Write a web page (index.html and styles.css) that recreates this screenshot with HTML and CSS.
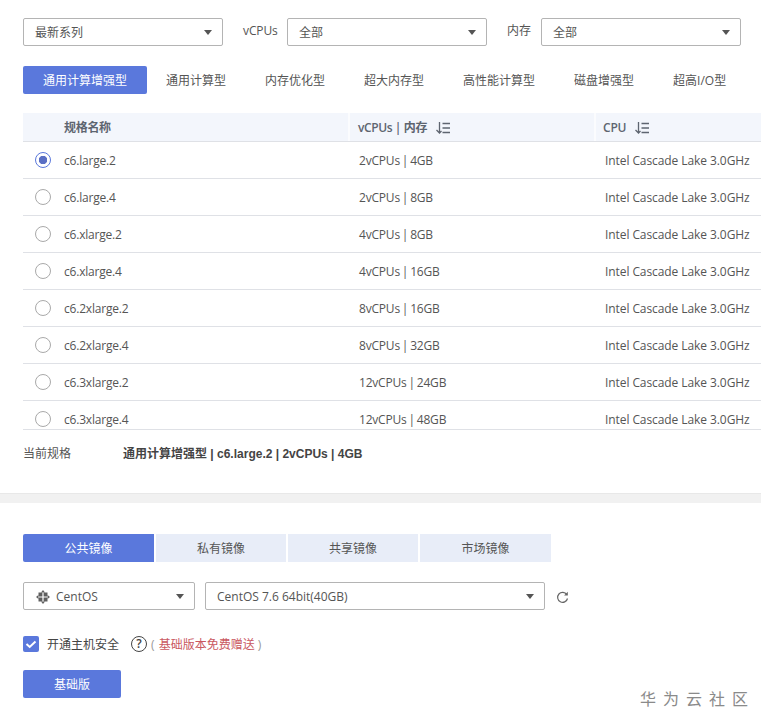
FILE: index.html
```html
<!DOCTYPE html>
<html lang="zh-CN">
<head>
<meta charset="utf-8">
<title>规格选择</title>
<link rel="stylesheet" href="styles.css">
</head>
<body>
<section class="spec">
  <div class="filters">
    <div class="select"><span>最新系列</span><i class="caret"></i></div>
    <label class="flabel l-vcpu">vCPUs</label>
    <div class="select"><span>全部</span><i class="caret"></i></div>
    <label class="flabel l-mem">内存</label>
    <div class="select"><span>全部</span><i class="caret"></i></div>
  </div>
  <div class="types">
    <a class="type active">通用计算增强型</a>
    <a class="type t2">通用计算型</a>
    <a class="type t3">内存优化型</a>
    <a class="type t3">超大内存型</a>
    <a class="type t3">高性能计算型</a>
    <a class="type t3">磁盘增强型</a>
    <a class="type t3">超高I/O型</a>
  </div>
  <div class="table">
    <div class="thead">
      <div class="c1"></div>
      <div class="c2 th">规格名称</div>
      <div class="c3 th">vCPUs | 内存
        <svg class="sort" width="15" height="12" viewBox="0 0 15 12"><path d="M4.500 0v11M1.500 8l3 3 2-2M7.500 1.500h8M7.500 6h8M7.500 10.500h8" fill="none" stroke="#5e6570" stroke-width="1.300"/></svg>
      </div>
      <div class="c4 th">CPU
        <svg class="sort" width="15" height="12" viewBox="0 0 15 12"><path d="M4.500 0v11M1.500 8l3 3 2-2M7.500 1.500h8M7.500 6h8M7.500 10.500h8" fill="none" stroke="#5e6570" stroke-width="1.300"/></svg>
      </div>
    </div>
    <div class="tbody">
      <div class="row"><div class="c1"><i class="radio on"></i></div><div class="c2">c6.large.2</div><div class="c3">2vCPUs | 4GB</div><div class="c4">Intel Cascade Lake 3.0GHz</div></div>
      <div class="row"><div class="c1"><i class="radio"></i></div><div class="c2">c6.large.4</div><div class="c3">2vCPUs | 8GB</div><div class="c4">Intel Cascade Lake 3.0GHz</div></div>
      <div class="row"><div class="c1"><i class="radio"></i></div><div class="c2">c6.xlarge.2</div><div class="c3">4vCPUs | 8GB</div><div class="c4">Intel Cascade Lake 3.0GHz</div></div>
      <div class="row"><div class="c1"><i class="radio"></i></div><div class="c2">c6.xlarge.4</div><div class="c3">4vCPUs | 16GB</div><div class="c4">Intel Cascade Lake 3.0GHz</div></div>
      <div class="row"><div class="c1"><i class="radio"></i></div><div class="c2">c6.2xlarge.2</div><div class="c3">8vCPUs | 16GB</div><div class="c4">Intel Cascade Lake 3.0GHz</div></div>
      <div class="row"><div class="c1"><i class="radio"></i></div><div class="c2">c6.2xlarge.4</div><div class="c3">8vCPUs | 32GB</div><div class="c4">Intel Cascade Lake 3.0GHz</div></div>
      <div class="row"><div class="c1"><i class="radio"></i></div><div class="c2">c6.3xlarge.2</div><div class="c3">12vCPUs | 24GB</div><div class="c4">Intel Cascade Lake 3.0GHz</div></div>
      <div class="row"><div class="c1"><i class="radio"></i></div><div class="c2">c6.3xlarge.4</div><div class="c3">12vCPUs | 48GB</div><div class="c4">Intel Cascade Lake 3.0GHz</div></div>
    </div>
  </div>
  <div class="current"><span class="clabel">当前规格</span><strong>通用计算增强型 | c6.large.2 | 2vCPUs | 4GB</strong></div>
</section>
<div class="band"></div>
<section class="image">
  <div class="imgtabs">
    <a class="imgtab active">公共镜像</a>
    <a class="imgtab">私有镜像</a>
    <a class="imgtab">共享镜像</a>
    <a class="imgtab last">市场镜像</a>
  </div>
  <div class="imgselects">
    <div class="select os-select">
      <span class="os">
        <svg width="14" height="14" viewBox="0 0 14 14"><g fill="#5f5f5f"><path d="M2.500 2.500h3.900v3.900H2.500zM7.600 2.500h3.900v3.900H7.600zM2.500 7.600h3.900v3.900H2.500zM7.600 7.600h3.900v3.900H7.600z"/><path d="M7 0l2 2.400H5zM7 14l-2-2.400h4zM0 7l2.400-2v4zM14 7l-2.400 2V5z"/></g></svg>
        CentOS
      </span><i class="caret"></i>
    </div>
    <div class="select version-select"><span>CentOS 7.6 64bit(40GB)</span><i class="caret"></i></div>
    <svg class="refresh" width="13" height="13" viewBox="0 0 13 13"><path d="M10.800 3.600A5 5 0 1 0 11.500 7.500" fill="none" stroke="#666" stroke-width="1.200"/><path d="M11.800 0.800v3.700H8.100z" fill="#666"/></svg>
  </div>
  <div class="security">
    <i class="check"><svg width="16" height="16" viewBox="0 0 16 16"><path d="M3.500 8l3.200 3 5.800-5.500" fill="none" stroke="#fff" stroke-width="2"/></svg></i>
    <span class="seclabel">开通主机安全</span>
    <i class="help">?</i>
    <span class="note">( <em>基础版本免费赠送</em> )</span>
  </div>
  <a class="basic">基础版</a>
</section>
<div class="watermark">华为云社区</div>
</body>
</html>
```
FILE: styles.css
```css
* { box-sizing: border-box; }
html, body { margin: 0; padding: 0; }
body {
  width: 761px;
  height: 725px;
  overflow: hidden;
  position: relative;
  background: #fff;
  color: #555;
  font: 12px/16px "Open Sans", "Noto Sans CJK SC", sans-serif;
}
i, em { font-style: normal; }

.spec { padding: 18px 0 0 23px; height: 493px; }
.filters { display: flex; align-items: center; height: 28px; }
.select {
  display: flex;
  align-items: center;
  justify-content: space-between;
  width: 200px;
  height: 28px;
  padding: 0 10px 0 11px;
  border: 1px solid #b4b4b4;
  border-radius: 2px;
  background: #fff;
  flex: none;
  color: #555;
}
.select > span { padding-top: 2px; }
.os-select { width: 172px; }
.version-select { width: 340px; }
.caret {
  width: 0; height: 0;
  border-left: 4px solid transparent;
  border-right: 4px solid transparent;
  border-top: 5px solid #555;
}
.flabel { flex: none; position: relative; top: -1px; }
.l-vcpu { margin-left: 20px; width: 44px; letter-spacing: -0.1px; }
.l-mem { margin-left: 20px; width: 34px; }

.types { display: flex; margin-top: 20px; height: 28px; align-items: center; }
.type { flex: none; line-height: 30px; height: 28px; white-space: nowrap; color: #555; }
.type.active { width: 124px; text-align: center; background: #5a78dc; color: #fff; border-radius: 2px; }
.t2 { margin-left: 19px; }
.t3 { margin-left: 39px; }

.table { margin-top: 19px; width: 738px; }
.thead { display: flex; height: 29px; background: #f3f6fc; border-bottom: 1px solid #dfe1e6; align-items: center; }
.thead .th { font-weight: 600; color: #5e6570; display: flex; align-items: center; height: 28px; padding-top: 1px; word-spacing: 0; }
.thead .c2 { letter-spacing: -0.3px; }
.thead .c3 { border-left: 2px solid #fbfcfe; padding-left: 8px; letter-spacing: -0.4px; }
.thead .c4 { border-left: 2px solid #fbfcfe; padding-left: 7px; letter-spacing: -0.2px; }
.sort { margin-left: 8px; }
.c1 { width: 41px; flex: none; display: flex; }
.c2 { width: 284px; flex: none; letter-spacing: -0.2px; }
.c3 { width: 246px; flex: none; letter-spacing: -0.2px; word-spacing: -1px; }
.c4 { flex: 1; white-space: nowrap; letter-spacing: -0.08px; }
.tbody { height: 288px; overflow: hidden; border-bottom: 1px solid #dfe1e6; }
.row { display: flex; align-items: center; height: 37px; border-bottom: 1px solid #dfe1e6; }
.row .c2, .row .c3, .row .c4 { padding-top: 2px; }
.row .c3 { padding-left: 11px; }
.row .c4 { padding-left: 11px; }
.radio {
  display: block;
  width: 16px; height: 16px;
  margin-left: 12px;
  border: 1px solid #a9a9a9;
  border-radius: 50%;
  background: #fff;
}
.radio.on { border-color: #5a78dc; background: radial-gradient(circle, #5a6fc4 0 4px, #fff 4.500px); }

.current { display: flex; margin-top: 16px; line-height: 16px; }
.clabel { width: 100px; flex: none; }
.current strong { font: bold 12px/16px "Liberation Sans", "Noto Sans CJK SC", sans-serif; color: #444; }

.band { height: 10px; background: #f1f1f1; border-top: 1px solid #e8e8e8; }

.image { padding: 31px 0 0 23px; }
.imgtabs { display: flex; gap: 2px; height: 28px; }
.imgtab { width: 130px; line-height: 30px; text-align: center; background: #e8edf8; color: #555; }
.imgtab.active { width: 131px; background: #5a78dc; color: #fff; border-radius: 2px 0 0 2px; }
.imgtab.last { width: 131px; }
.imgselects { display: flex; align-items: center; gap: 10px; margin-top: 20px; height: 28px; }
.os { display: flex; align-items: center; gap: 6px; margin-left: 1px; }
.refresh { margin-left: 1px; margin-top: 3px; }

.security { display: flex; align-items: center; height: 18px; margin-top: 25px; }
.check { width: 16px; height: 16px; background: #5a78dc; border-radius: 2px; display: block; margin-top: -1px; }
.seclabel { margin-left: 8px; color: #444; padding-top: 1px; }
.help {
  width: 16px; height: 16px;
  margin-left: 12px;
  border: 1px solid #444;
  border-radius: 50%;
  text-align: center;
  line-height: 14px;
  font-size: 12px;
  font-weight: 600;
  color: #444;
}
.note { margin-left: 4px; color: #999; padding-top: 1px; }
.note em { color: #c9585f; margin-left: 1px; }

.basic {
  display: block;
  width: 98px;
  margin-top: 17px;
  line-height: 30px;
  height: 28px;
  text-align: center;
  color: #fff;
  background: #5a78dc;
  border-radius: 2px;
}

.watermark {
  position: absolute;
  right: 13px;
  top: 689px;
  font-size: 16px;
  line-height: 20px;
  letter-spacing: 7px;
  margin-right: -7px;
  color: #8a8a8a;
}
```
